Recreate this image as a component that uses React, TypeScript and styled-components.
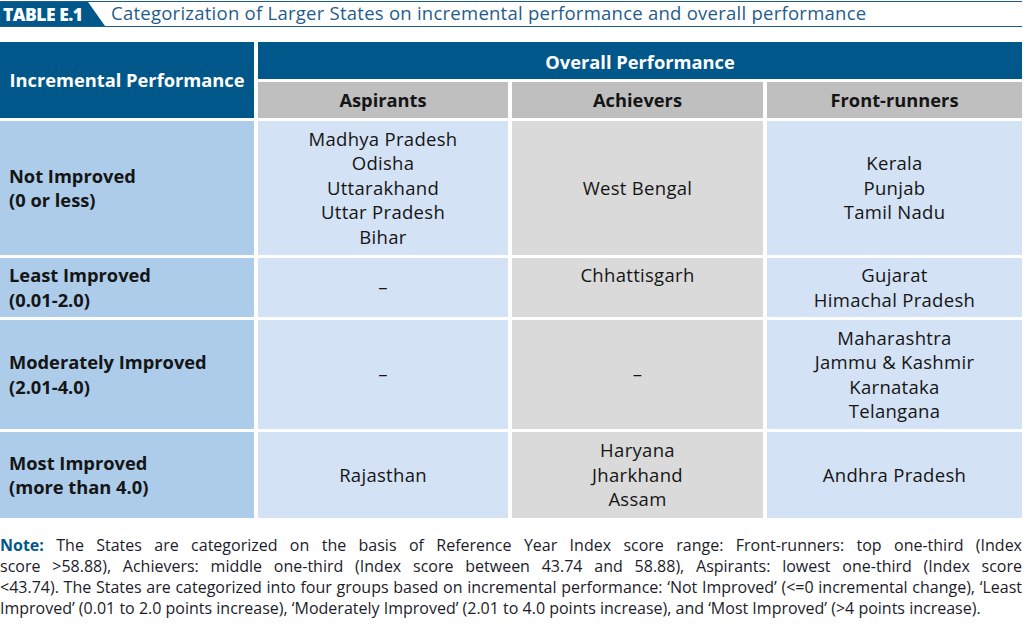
import React from "react";
import styled, { createGlobalStyle } from "styled-components";

const Colors = {
  navy: "#00578a",
  titleBlue: "#1f5c8c",
  headGray: "#bfbfbf",
  firstCol: "#acccea",
  lightBlue: "#d3e2f4",
  lightGray: "#dadada",
  text: "#151515",
};

const GlobalStyle = createGlobalStyle`
  body {
    margin: 0;
    background: #ffffff;
    font-family: "Open Sans", "Lato", sans-serif;
  }
`;

const Page = styled.div`
  width: 1022px;
  padding-top: 1px;
`;

const TitleBar = styled.div`
  display: flex;
  align-items: center;
  height: 24px;
  border-top: 1.5px solid ${Colors.titleBlue};
  border-bottom: 1.5px solid ${Colors.titleBlue};
`;

const TitleLabel = styled.div`
  height: 100%;
  width: 105px;
  flex: none;
  box-sizing: border-box;
  padding-left: 3px;
  display: flex;
  align-items: center;
  background: ${Colors.navy};
  clip-path: polygon(0 0, 88px 0, 105px 100%, 0 100%);
  color: #fff;
  font-weight: 800;
  font-size: 17.5px;
  letter-spacing: -0.5px;
`;

const TitleText = styled.div`
  margin-left: 6px;
  padding-bottom: 3px;
  color: ${Colors.titleBlue};
  font-size: 18.5px;
  letter-spacing: 0.25px;
  white-space: nowrap;
`;

const Grid = styled.div`
  margin-top: 15px;
  display: grid;
  grid-template-columns: 254px 250px 251px 1fr;
  grid-template-rows: 37px 36px 134px 59px 109px 86px;
  gap: 3px 4px;
`;

type CellProps = { $bg: string; $align?: "left" | "center"; $bold?: boolean; $color?: string };

const Cell = styled.div<CellProps>`
  display: flex;
  flex-direction: column;
  justify-content: center;
  align-items: ${(p) => (p.$align === "left" ? "flex-start" : "center")};
  text-align: ${(p) => p.$align ?? "center"};
  padding: 0 9px;
  background: ${(p) => p.$bg};
  color: ${(p) => p.$color ?? Colors.text};
  font-weight: ${(p) => (p.$bold ? 700 : 400)};
  font-size: ${(p) => (p.$bold ? "18.3px" : "18.5px")};
  letter-spacing: ${(p) => (p.$bold ? "0" : "0.3px")};
  line-height: 24.5px;
  white-space: nowrap;
`;

const CornerCell = styled(Cell)`
  grid-row: 1 / span 2;
  align-items: center;
`;

const OverallCell = styled(Cell)`
  grid-column: 2 / span 3;
  padding-top: 4px;
`;

const Note = styled.div`
  margin-top: 17px;
  font-size: 16px;
  line-height: 21px;
  color: #1c1c2a;

  b {
    color: ${Colors.navy};
  }
`;

const NoteLine = styled.span<{ $last?: boolean }>`
  display: block;
  white-space: nowrap;
  text-align: ${(p) => (p.$last ? "left" : "justify")};
  text-align-last: ${(p) => (p.$last ? "left" : "justify")};
`;

const rows: { label: string[]; cells: string[][] }[] = [
  {
    label: ["Not Improved", "(0 or less)"],
    cells: [
      ["Madhya Pradesh", "Odisha", "Uttarakhand", "Uttar Pradesh", "Bihar"],
      ["West Bengal"],
      ["Kerala", "Punjab", "Tamil Nadu"],
    ],
  },
  {
    label: ["Least Improved", "(0.01-2.0)"],
    cells: [["–"], ["Chhattisgarh", "\u00a0"], ["Gujarat", "Himachal Pradesh"]],
  },
  {
    label: ["Moderately Improved", "(2.01-4.0)"],
    cells: [["–"], ["–"], ["Maharashtra", "Jammu & Kashmir", "Karnataka", "Telangana"]],
  },
  {
    label: ["Most Improved", "(more than 4.0)"],
    cells: [["Rajasthan"], ["Haryana", "Jharkhand", "Assam"], ["Andhra Pradesh"]],
  },
];

const cellColors = [Colors.lightBlue, Colors.lightGray, Colors.lightBlue];

const Lines = ({ items }: { items: string[] }) => (
  <>
    {items.map((t, i) => (
      <span key={i}>{t}</span>
    ))}
  </>
);

export default function App() {
  return (
    <Page>
      <GlobalStyle />
      <TitleBar>
        <TitleLabel>TABLE E.1</TitleLabel>
        <TitleText>Categorization of Larger States on incremental performance and overall performance</TitleText>
      </TitleBar>

      <Grid>
        <CornerCell $bg={Colors.navy} $color="#fff" $bold>
          Incremental Performance
        </CornerCell>
        <OverallCell $bg={Colors.navy} $color="#fff" $bold>
          Overall Performance
        </OverallCell>
        <Cell $bg={Colors.headGray} $bold>Aspirants</Cell>
        <Cell $bg={Colors.headGray} $bold>Achievers</Cell>
        <Cell $bg={Colors.headGray} $bold>Front-runners</Cell>

        {rows.map((row) => (
          <React.Fragment key={row.label[0]}>
            <Cell $bg={Colors.firstCol} $align="left" $bold>
              <Lines items={row.label} />
            </Cell>
            {row.cells.map((c, i) => (
              <Cell key={i} $bg={cellColors[i]}>
                <Lines items={c} />
              </Cell>
            ))}
          </React.Fragment>
        ))}
      </Grid>

      <Note>
        <NoteLine>
          <b>Note:</b> The States are categorized on the basis of Reference Year Index score range: Front-runners: top
          one-third (Index
        </NoteLine>
        <NoteLine>
          score &gt;58.88), Achievers: middle one-third (Index score between 43.74 and 58.88), Aspirants: lowest
          one-third (Index score
        </NoteLine>
        <NoteLine>
          &lt;43.74). The States are categorized into four groups based on incremental performance: ‘Not Improved’
          (&lt;=0 incremental change), ‘Least
        </NoteLine>
        <NoteLine $last>
          Improved’ (0.01 to 2.0 points increase), ‘Moderately Improved’ (2.01 to 4.0 points increase), and ‘Most
          Improved’ (&gt;4 points increase).
        </NoteLine>
      </Note>
    </Page>
  );
}
